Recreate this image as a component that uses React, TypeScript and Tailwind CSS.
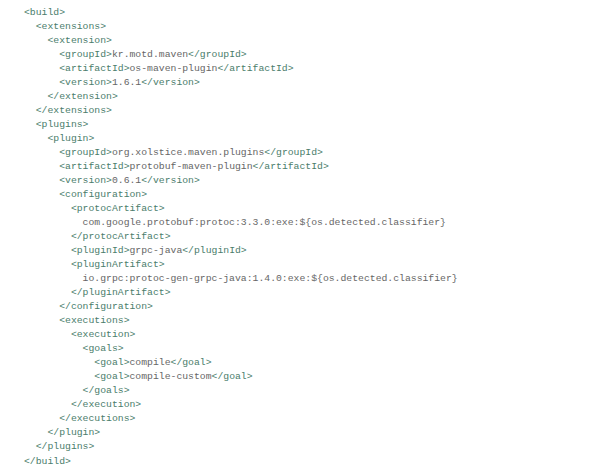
import React from "react";

type Line = { indent: number; parts: { t: string; tag?: boolean }[] };

const T = (t: string) => ({ t, tag: true });
const X = (t: string) => ({ t });

const lines: Line[] = [
  { indent: 0, parts: [T("<build>")] },
  { indent: 1, parts: [T("<extensions>")] },
  { indent: 2, parts: [T("<extension>")] },
  { indent: 3, parts: [T("<groupId>"), X("kr.motd.maven"), T("</groupId>")] },
  { indent: 3, parts: [T("<artifactId>"), X("os-maven-plugin"), T("</artifactId>")] },
  { indent: 3, parts: [T("<version>"), X("1.6.1"), T("</version>")] },
  { indent: 2, parts: [T("</extension>")] },
  { indent: 1, parts: [T("</extensions>")] },
  { indent: 1, parts: [T("<plugins>")] },
  { indent: 2, parts: [T("<plugin>")] },
  { indent: 3, parts: [T("<groupId>"), X("org.xolstice.maven.plugins"), T("</groupId>")] },
  { indent: 3, parts: [T("<artifactId>"), X("protobuf-maven-plugin"), T("</artifactId>")] },
  { indent: 3, parts: [T("<version>"), X("0.6.1"), T("</version>")] },
  { indent: 3, parts: [T("<configuration>")] },
  { indent: 4, parts: [T("<protocArtifact>")] },
  { indent: 5, parts: [X("com.google.protobuf:protoc:3.3.0:exe:${os.detected.classifier}")] },
  { indent: 4, parts: [T("</protocArtifact>")] },
  { indent: 4, parts: [T("<pluginId>"), X("grpc-java"), T("</pluginId>")] },
  { indent: 4, parts: [T("<pluginArtifact>")] },
  { indent: 5, parts: [X("io.grpc:protoc-gen-grpc-java:1.4.0:exe:${os.detected.classifier}")] },
  { indent: 4, parts: [T("</pluginArtifact>")] },
  { indent: 3, parts: [T("</configuration>")] },
  { indent: 3, parts: [T("<executions>")] },
  { indent: 4, parts: [T("<execution>")] },
  { indent: 5, parts: [T("<goals>")] },
  { indent: 6, parts: [T("<goal>"), X("compile"), T("</goal>")] },
  { indent: 6, parts: [T("<goal>"), X("compile-custom"), T("</goal>")] },
  { indent: 5, parts: [T("</goals>")] },
  { indent: 4, parts: [T("</execution>")] },
  { indent: 3, parts: [T("</executions>")] },
  { indent: 2, parts: [T("</plugin>")] },
  { indent: 1, parts: [T("</plugins>")] },
  { indent: 0, parts: [T("</build>")] },
];

export default function App() {
  return (
    <div className="w-[600px] h-[476px] bg-white overflow-hidden">
      <div
        className="flex flex-col pt-[6px] pl-[24px] text-[9.77px] leading-[14px] whitespace-pre text-[#666666]"
        style={{ fontFamily: '"Liberation Mono", "DejaVu Sans Mono", monospace' }}
      >
        {lines.map((l, i) => (
          <div key={i} className="h-[14.03px]">
            {"  ".repeat(l.indent)}
            {l.parts.map((p, j) =>
              p.tag ? (
                <span key={j} className="text-[#4a7d6b]">
                  {p.t}
                </span>
              ) : (
                <span key={j}>{p.t}</span>
              )
            )}
          </div>
        ))}
      </div>
    </div>
  );
}
